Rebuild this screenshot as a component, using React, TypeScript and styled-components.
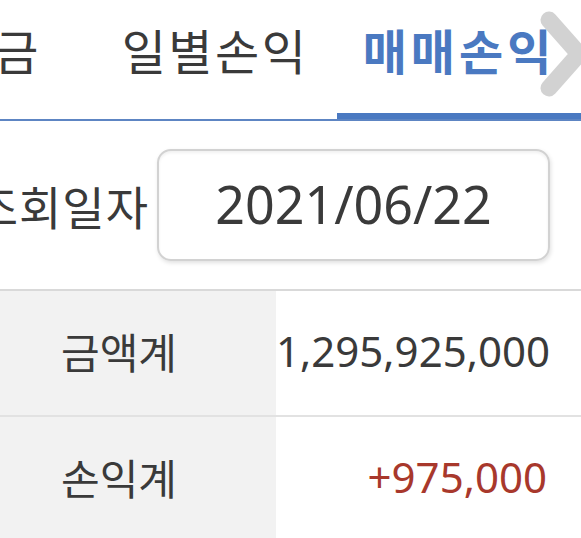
import React from "react";
import styled, { createGlobalStyle } from "styled-components";

const GlobalStyle = createGlobalStyle`
  html, body { margin: 0; padding: 0; background: #ffffff; }
  body {
    font-family: "Noto Sans", "Noto Sans CJK KR", sans-serif;
    color: #3a3a3a;
    overflow: hidden;
  }
`;

const Page = styled.div`
  width: 581px;
  height: 538px;
  overflow: hidden;
  background: #ffffff;
`;

const TabBar = styled.div`
  position: relative;
  height: 119px;
  border-bottom: 2px solid #5d85c3;
  overflow: hidden;
`;

const TabTrack = styled.div`
  display: flex;
  justify-content: flex-end;
  height: 100%;
`;

const Tab = styled.div<{ $active?: boolean }>`
  flex: 0 0 244px;
  box-sizing: border-box;
  display: flex;
  justify-content: center;
  align-items: flex-start;
  padding-top: 25px;
  font-family: "Noto Sans CJK KR", sans-serif;
  font-size: 48px;
  line-height: 1;
  letter-spacing: ${(p) => (p.$active ? "4px" : "2.5px")};
  font-weight: ${(p) => (p.$active ? 700 : 400)};
  color: ${(p) => (p.$active ? "#4a79c1" : "#3a3a3a")};
  border-bottom: ${(p) => (p.$active ? "6px solid #4a79c1" : "6px solid transparent")};
  white-space: nowrap;
`;

const Chevron = styled.svg`
  position: absolute;
  right: -6px;
  top: 8px;
  width: 48px;
  height: 92px;
  opacity: 0.75;
`;

const DateRow = styled.div`
  display: flex;
  justify-content: flex-end;
  align-items: center;
  gap: 8px;
  height: 168px;
  padding-right: 31px;
  overflow: hidden;
`;

const DateLabel = styled.div`
  font-family: "Noto Sans CJK KR", sans-serif;
  font-size: 46px;
  letter-spacing: 1px;
  color: #3a3a3a;
  white-space: nowrap;
`;

const DateBox = styled.div`
  flex: 0 0 393px;
  height: 112px;
  box-sizing: border-box;
  border: 2px solid #d2d2d2;
  border-radius: 14px;
  box-shadow: 1px 2px 4px rgba(0, 0, 0, 0.12), inset 0 2px 3px rgba(0, 0, 0, 0.06);
  display: flex;
  align-items: center;
  justify-content: center;
  font-family: "Noto Sans", sans-serif;
  font-size: 52px;
  color: #3a3a3a;
  padding-bottom: 4px;
`;

const Table = styled.div`
  border-top: 2px solid #d9d9d9;
`;

const Row = styled.div`
  display: grid;
  grid-template-columns: 276px 1fr;
  height: 124px;
  border-bottom: 2px solid #e2e2e2;
`;

const LabelCell = styled.div`
  background: #f2f2f2;
  display: flex;
  align-items: center;
  justify-content: center;
  padding-right: 38px;
  padding-bottom: 6px;
  font-family: "Noto Sans CJK KR", sans-serif;
  font-size: 42px;
  color: #3a3a3a;
`;

const ValueCell = styled.div<{ $tone?: "up" | "plain" }>`
  display: flex;
  align-items: center;
  justify-content: flex-end;
  padding-right: 34px;
  padding-bottom: 5px;
  font-family: "Noto Sans", sans-serif;
  font-size: 42px;
  color: ${(p) => (p.$tone === "up" ? "#a8382c" : "#3a3a3a")};
`;

const tabs = [
  { label: "입출금", active: false },
  { label: "일별손익", active: false },
  { label: "매매손익", active: true },
];

const rows = [
  { label: "금액계", value: "1,295,925,000", tone: "plain" as const },
  { label: "손익계", value: "+975,000", tone: "up" as const },
];

export default function App() {
  return (
    <Page>
      <GlobalStyle />
      <TabBar>
        <TabTrack>
          {tabs.map((t) => (
            <Tab key={t.label} $active={t.active}>
              {t.label}
            </Tab>
          ))}
        </TabTrack>
        <Chevron viewBox="0 0 48 92">
          <polyline
            points="10,12 40,46 10,80"
            fill="none"
            stroke="#c4c4c4"
            strokeWidth="17"
            strokeLinecap="round"
            strokeLinejoin="round"
          />
        </Chevron>
      </TabBar>
      <DateRow>
        <DateLabel>조회일자</DateLabel>
        <DateBox>2021/06/22</DateBox>
      </DateRow>
      <Table>
        {rows.map((r) => (
          <Row key={r.label}>
            <LabelCell>{r.label}</LabelCell>
            <ValueCell $tone={r.tone}>{r.value}</ValueCell>
          </Row>
        ))}
      </Table>
    </Page>
  );
}
